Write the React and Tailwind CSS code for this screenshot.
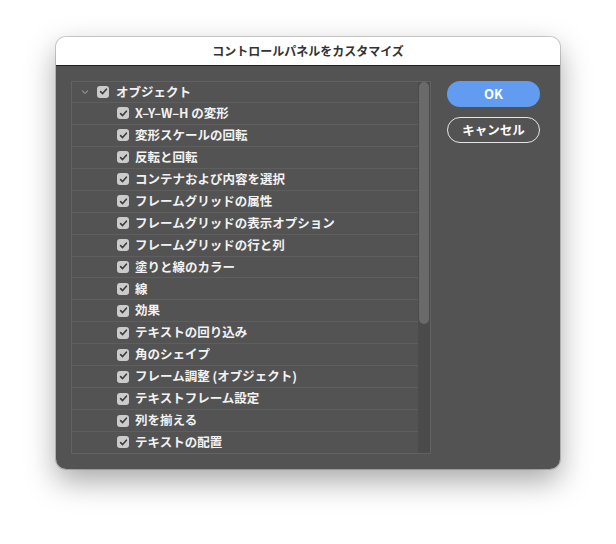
import React from "react";

const items = [
  "X–Y–W–H の変形",
  "変形スケールの回転",
  "反転と回転",
  "コンテナおよび内容を選択",
  "フレームグリッドの属性",
  "フレームグリッドの表示オプション",
  "フレームグリッドの行と列",
  "塗りと線のカラー",
  "線",
  "効果",
  "テキストの回り込み",
  "角のシェイプ",
  "フレーム調整 (オブジェクト)",
  "テキストフレーム設定",
  "列を揃える",
  "テキストの配置",
];

function Check() {
  return (
    <span className="flex h-[12px] w-[12px] shrink-0 items-center justify-center rounded-[3px] bg-[#cbcbcb]">
      <svg width="9" height="9" viewBox="0 0 9 9" fill="none">
        <path d="M1.6 4.6 L3.6 6.6 L7.4 2.2" stroke="#3c3c3c" strokeWidth="1.6" strokeLinecap="round" strokeLinejoin="round" />
      </svg>
    </span>
  );
}

const font = { fontFamily: '"Noto Sans CJK JP", "Noto Sans", sans-serif' };

export default function App() {
  return (
    <div className="h-[544px] w-[616px] bg-white pl-[56px] pt-[37px]" style={font}>
      <div className="flex h-[432px] w-[504px] flex-col overflow-hidden rounded-[10px] shadow-[0_12px_30px_rgba(0,0,0,0.35),0_0_0_1px_rgba(0,0,0,0.18)]">
        <div className="flex h-[28px] shrink-0 items-center justify-center bg-white text-[12px] font-bold text-[#333]">
          コントロールパネルをカスタマイズ
        </div>
        <div className="h-px shrink-0 bg-[#1e1e1e]" />
        <div className="flex flex-1 bg-[#535353] pl-[15px] pr-[20px] pt-[15px] pb-[15px]">
          <div className="flex h-[373px] w-[360px] border border-[#626262]">
            <div className="flex flex-1 flex-col">
              <div className="flex h-[20px] items-center text-[12.5px] font-semibold text-[#f2f2f2]">
                <svg className="ml-[9px] mr-[8px]" width="8" height="6" viewBox="0 0 8 6" fill="none">
                  <path d="M1 1.5 L4 4.5 L7 1.5" stroke="#8c8c8c" strokeWidth="1.1" />
                </svg>
                <Check />
                <span className="ml-[7px]">オブジェクト</span>
              </div>
              {items.map((t) => (
                <div key={t} className="flex h-[22px] items-center border-t border-[#5e5e5e] pl-[45px] text-[12.5px] font-semibold text-[#f2f2f2]">
                  <Check />
                  <span className="ml-[6px] whitespace-pre">{t}</span>
                </div>
              ))}
            </div>
            <div className="flex w-[12px] shrink-0 flex-col bg-[#4b4b4b] px-[1px]">
              <div className="h-[242px] w-[10px] rounded-full bg-[#6a6a6a]" />
            </div>
          </div>
          <div className="ml-[16px] flex flex-col gap-[10px]">
            <button className="h-[26px] w-[93px] rounded-full bg-[#619cf0] text-[13px] font-bold text-white">
              OK
            </button>
            <button className="h-[26px] w-[93px] rounded-full border border-[#e6e6e6] text-[12.5px] font-semibold text-white">
              キャンセル
            </button>
          </div>
        </div>
      </div>
    </div>
  );
}
